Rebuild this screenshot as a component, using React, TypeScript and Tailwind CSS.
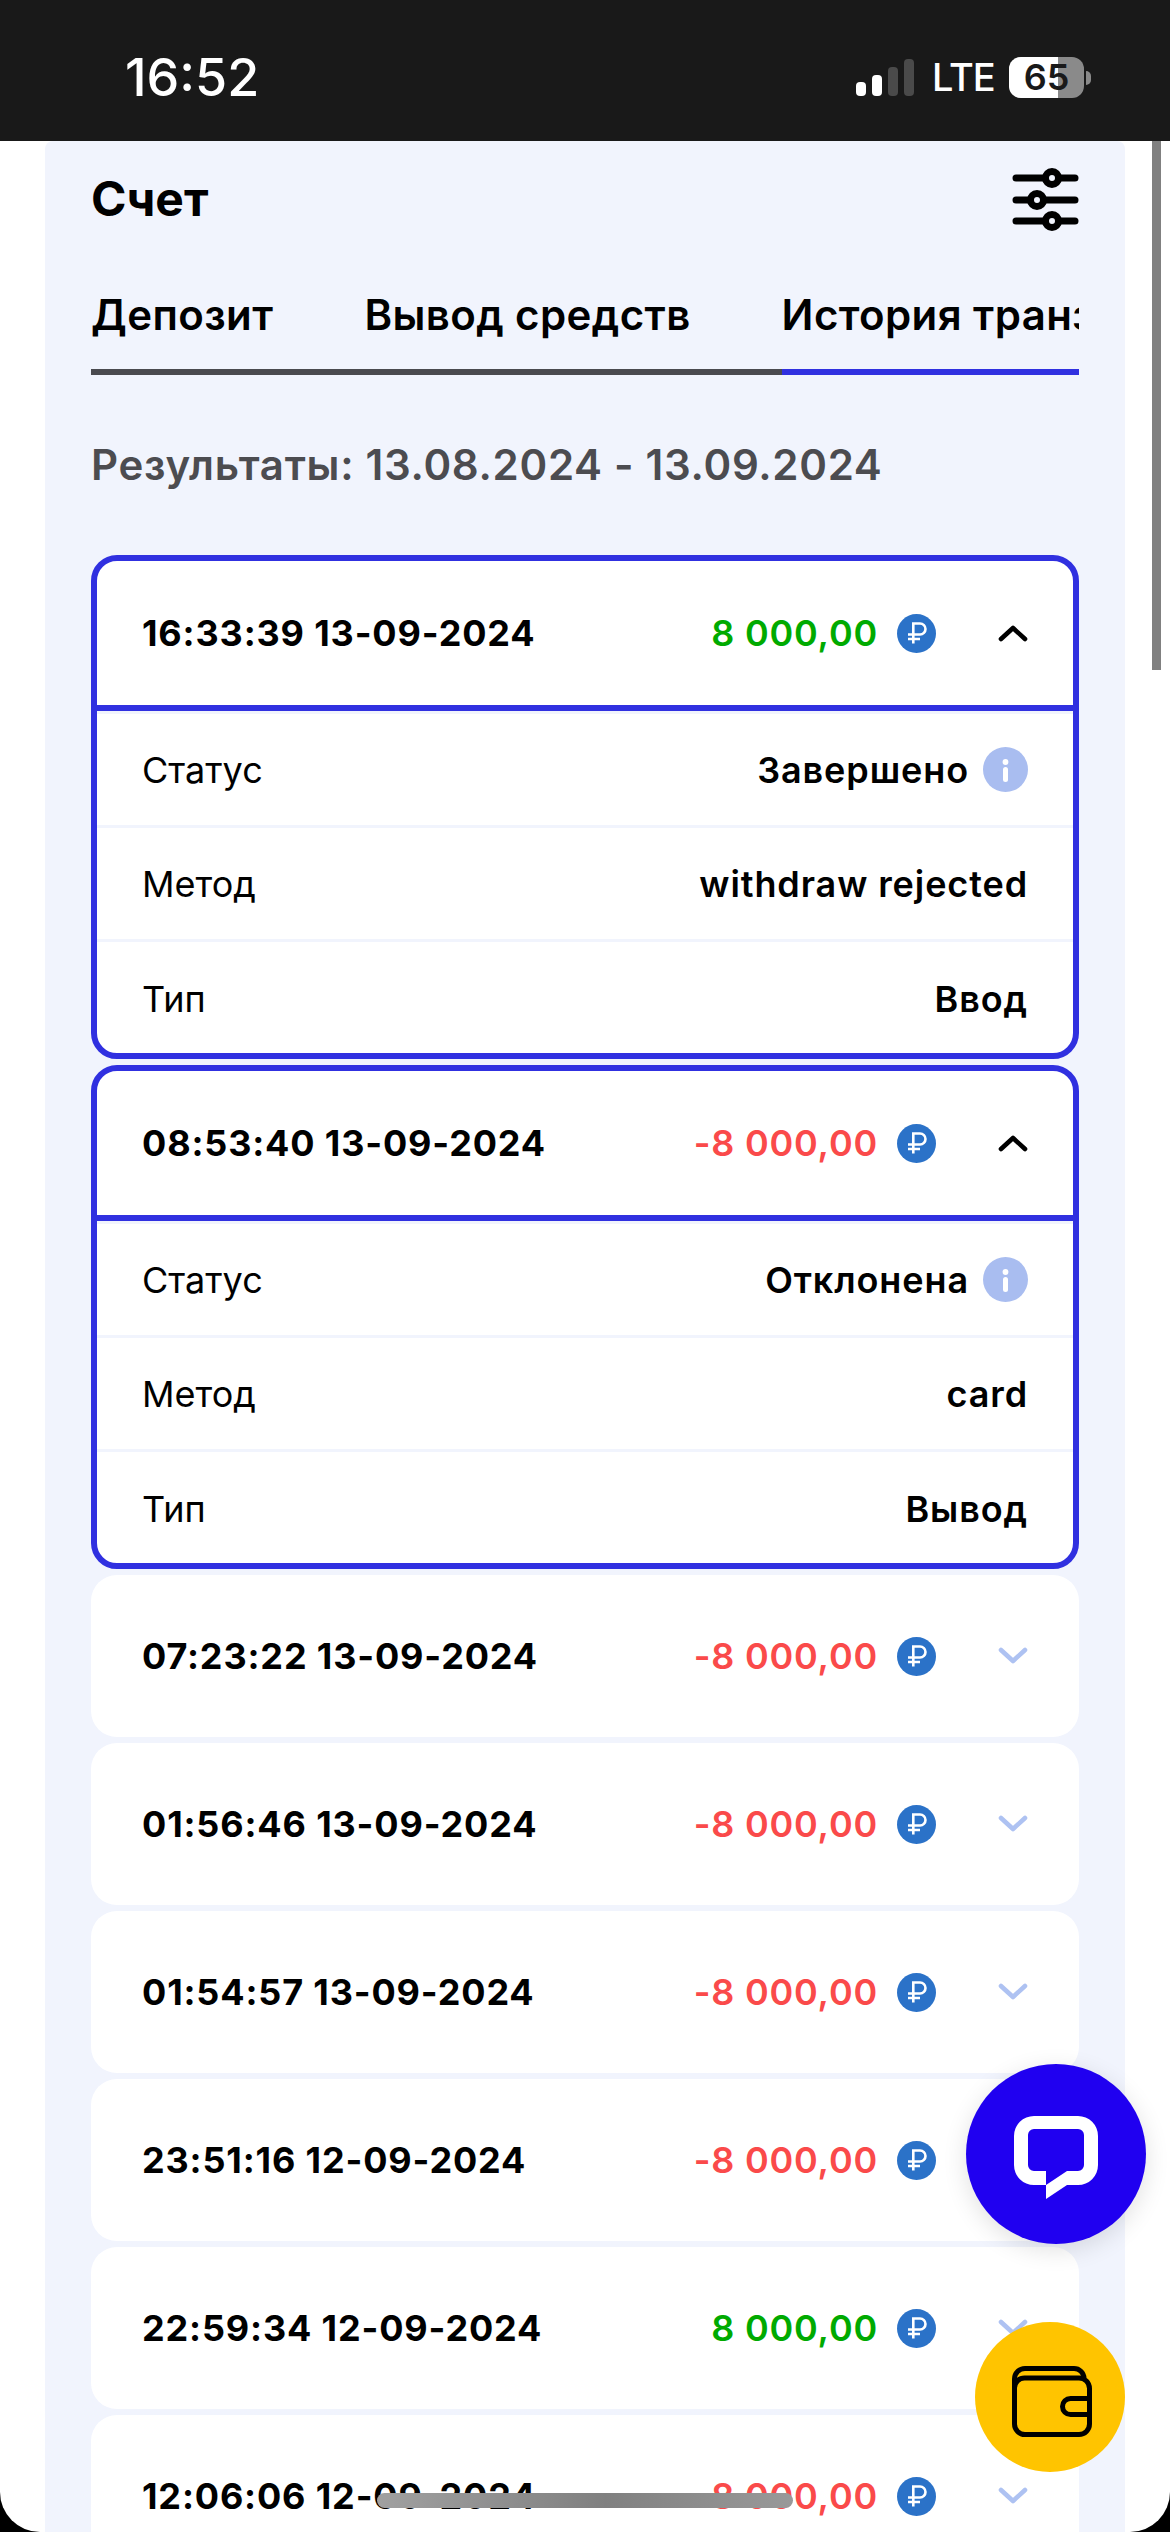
import React from 'react';

type Tx = { time: string; amount: string; open?: boolean; status?: string; method?: string; type?: string };

const txs: Tx[] = [
  { time: '16:33:39 13-09-2024', amount: '8 000,00', open: true, status: 'Завершено', method: 'withdraw rejected', type: 'Ввод' },
  { time: '08:53:40 13-09-2024', amount: '-8 000,00', open: true, status: 'Отклонена', method: 'card', type: 'Вывод' },
  { time: '07:23:22 13-09-2024', amount: '-8 000,00' },
  { time: '01:56:46 13-09-2024', amount: '-8 000,00' },
  { time: '01:54:57 13-09-2024', amount: '-8 000,00' },
  { time: '23:51:16 12-09-2024', amount: '-8 000,00' },
  { time: '22:59:34 12-09-2024', amount: '8 000,00' },
  { time: '12:06:06 12-09-2024', amount: '-8 000,00' },
];

const RubleIcon = () => (
  <svg width="39" height="39" viewBox="0 0 39 39" className="shrink-0">
    <circle cx="19.5" cy="19.5" r="19.5" fill="#2b72c8" />
    <path d="M16.3 29.5V9.500H23a5.500 5.500 0 0 1 0 11H11M11 25H23" fill="none" stroke="#fff" strokeWidth="2.6" />
  </svg>
);

const InfoIcon = () => (
  <svg width="45" height="45" viewBox="0 0 45 45" className="shrink-0">
    <circle cx="22.5" cy="22.5" r="22.5" fill="#a9bdf0" />
    <circle cx="22.5" cy="15" r="2.9" fill="#fff" />
    <rect x="20" y="20" width="5" height="15" rx="2.5" fill="#fff" />
  </svg>
);

const Chevron = ({ open }: { open?: boolean }) => (
  <svg width="30" height="18" viewBox="0 0 30 18" className="shrink-0">
    <path
      d={open ? 'M3 15 15 4l12 11' : 'M3 3l12 11L27 3'}
      fill="none"
      stroke={open ? '#000' : '#aec2f2'}
      strokeWidth="4.6"
      strokeLinecap="round"
      strokeLinejoin="round"
    />
  </svg>
);

const SlidersIcon = () => (
  <svg width="67" height="66" viewBox="0 0 67 66">
    <g stroke="#000" strokeWidth="7" strokeLinecap="round">
      <path d="M4 12h59M4 34h59M4 55h59" />
    </g>
    <g fill="#f1f4fd" stroke="#000" strokeWidth="7">
      <circle cx="40" cy="12" r="6.5" />
      <circle cx="25" cy="34" r="6.5" />
      <circle cx="40" cy="55" r="6.5" />
    </g>
  </svg>
);

const ChatIcon = () => (
  <svg width="84" height="83" viewBox="0 0 84 83">
    <path
      fillRule="evenodd"
      fill="#fff"
      d="M20 0H64A20 20 0 0 1 84 20V49A20 20 0 0 1 64 69H53L32 83V69H20A20 20 0 0 1 0 49V20A20 20 0 0 1 20 0ZM20 13A6 6 0 0 0 14 19V49A6 6 0 0 0 20 55H32V69L53 55H64A6 6 0 0 0 70 49V19A6 6 0 0 0 64 13Z"
    />
  </svg>
);

const WalletIcon = () => (
  <svg width="80" height="71" viewBox="0 0 80 71" fill="none" stroke="#000" strokeWidth="5">
    <path d="M2.500 58V13A10.500 10.500 0 0 1 13 2.500H62A10 10 0 0 1 72 12" />
    <path d="M2.500 22A10 10 0 0 1 12.500 12H67A10.500 10.500 0 0 1 77.500 22.500V58A10.500 10.500 0 0 1 67 68.500H13A10.500 10.500 0 0 1 2.500 58Z" />
    <path d="M77 32.500H58.500A8 8 0 0 0 58.500 48.500H77" />
  </svg>
);

const DetailRow = ({ label, value, info, last }: { label: string; value: string; info?: boolean; last?: boolean }) => (
  <div className={`flex items-center justify-between px-[45px] ${last ? 'h-[111px] pt-[2px]' : 'h-[114px] border-b-[3px] border-[#f1f4fd]'}`}>
    <span className="text-[36px] font-normal text-black">{label}</span>
    <span className="flex items-center gap-[14px] text-[36px] font-semibold tracking-[0.9px] text-black">
      {value}
      {info && <InfoIcon />}
    </span>
  </div>
);

const TxCard = ({ tx }: { tx: Tx }) => {
  const negative = tx.amount.startsWith('-');
  return (
    <div className={`overflow-hidden rounded-[26px] bg-white ${tx.open ? 'border-[6px] border-[#3030e0]' : ''}`}>
      <div className={`flex items-center justify-between ${tx.open ? 'h-[144px] border-b-[6px] border-[#3030e0] px-[45px] box-content' : 'h-[162px] px-[51px]'}`}>
        <span className="text-[36px] font-bold tracking-[0.85px] text-black">{tx.time}</span>
        <div className="flex items-center">
          <span className={`text-[36px] font-semibold tracking-[0.8px] ${negative ? 'text-[#fa4a4a]' : 'text-[#00aa00]'}`}>{tx.amount}</span>
          <span className="ml-[19px]">
            <RubleIcon />
          </span>
          <span className="ml-[62px]">
            <Chevron open={tx.open} />
          </span>
        </div>
      </div>
      {tx.open && (
        <div className="border-t-[3px] border-[#f1f4fd]">
          <DetailRow label="Статус" value={tx.status ?? ''} info />
          <DetailRow label="Метод" value={tx.method ?? ''} />
          <DetailRow label="Тип" value={tx.type ?? ''} last />
        </div>
      )}
    </div>
  );
};

export default function App() {
  return (
    <div className="relative h-[2532px] w-[1170px] overflow-hidden bg-black font-['Inter',sans-serif]">
      <div className="h-full overflow-hidden rounded-b-[40px] bg-white">
        <div className="flex h-[141px] items-start justify-between bg-[#191919] pl-[125px] pr-[79px] pt-[49px]">
          <span className="text-[52px] font-medium leading-[58px] text-white">16:52</span>
          <div className="flex items-center pt-[8px]">
            <div className="flex items-end gap-[6px]">
              <div className="h-[14px] w-[10px] rounded-[4px] bg-white" />
              <div className="h-[21px] w-[10px] rounded-[4px] bg-white" />
              <div className="h-[29px] w-[10px] rounded-[4px] bg-[#4a4a4a]" />
              <div className="h-[37px] w-[10px] rounded-[4px] bg-[#4a4a4a]" />
            </div>
            <span className="ml-[18px] w-[59px] whitespace-nowrap text-[38px] font-medium leading-[41px] tracking-[-1px] text-white">LTE</span>
            <div className="relative ml-[18px] flex h-[41px] w-[75px] items-center justify-center rounded-[12px] bg-[#8a8a8a]">
              <div className="absolute inset-y-0 left-0 w-[49px] rounded-l-[12px] bg-white" />
              <span className="relative text-[36px] font-semibold leading-[41px] text-[#191919]">65</span>
            </div>
            <div className="ml-[2px] h-[14px] w-[5px] rounded-r-full bg-[#8a8a8a]" />
          </div>
        </div>

        <div className="mx-[45px] h-full rounded-t-[8px] bg-[#f1f4fd] px-[46px]">
          <div className="flex h-[116px] items-center justify-between">
            <h1 className="text-[48px] font-bold leading-none text-black">Счет</h1>
            <SlidersIcon />
          </div>

          <div className="mt-[19px] flex overflow-hidden whitespace-nowrap text-[42px] font-semibold leading-[78px] tracking-[0.4px] text-black">
            <span className="border-b-[6px] border-[#4a4a4f] pb-[15px] pr-[91px]">Депозит</span>
            <span className="border-b-[6px] border-[#4a4a4f] pb-[15px] pr-[91px]">Вывод средств</span>
            <span className="flex-1 border-b-[6px] border-[#3030e0] pb-[15px]">История транзакций</span>
          </div>

          <p className="mt-[64px] text-[42px] font-semibold leading-[52px] tracking-[0.7px] text-[#4c4c50]">Результаты: 13.08.2024 - 13.09.2024</p>

          <div className="mt-[64px] flex flex-col gap-[6px]">
            {txs.map((tx) => (
              <TxCard key={tx.time} tx={tx} />
            ))}
          </div>
        </div>
      </div>

      <div className="absolute left-[1152px] top-[141px] h-[529px] w-[9px] bg-[#808080]" />

      <button className="absolute left-[966px] top-[2064px] flex h-[180px] w-[180px] items-center justify-center rounded-full bg-[#2000f0] pt-[6px] shadow-[0_6px_24px_rgba(0,0,0,0.12)]">
        <ChatIcon />
      </button>
      <button className="absolute left-[975px] top-[2322px] flex h-[150px] w-[150px] items-center justify-center rounded-full bg-[#ffc400] pl-[4px] pt-[9px]">
        <WalletIcon />
      </button>

      <div className="absolute left-[377px] top-[2493px] h-[15px] w-[416px] rounded-full bg-[linear-gradient(90deg,#a0a0a0_0%,#808080_55%,#999999_100%)]" />
    </div>
  );
}
